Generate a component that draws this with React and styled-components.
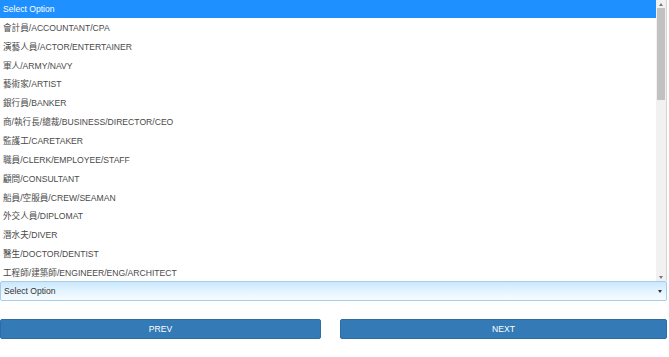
import React from "react";
import styled, { createGlobalStyle } from "styled-components";

const GlobalStyle = createGlobalStyle`
  html, body {
    margin: 0;
    padding: 0;
    background: #ffffff;
  }
  body {
    font-family: "Liberation Sans", "Noto Sans CJK TC", Arial, sans-serif;
  }
`;

const Page = styled.div`
  width: 667px;
  padding-top: 281px;
  display: flex;
  flex-direction: column;
  gap: 18px;
`;

const Field = styled.div`
  position: relative;
`;

const SelectBox = styled.div`
  height: 20px;
  box-sizing: border-box;
  border: 1px solid #a7cdec;
  border-radius: 2px;
  background: linear-gradient(to bottom, #c9e8fd 0%, #e6f5ff 55%, #f7fcff 100%);
  display: flex;
  align-items: center;
  justify-content: space-between;
  padding: 0 4px 0 3px;
  font-size: 8.6px;
  color: #333333;
`;

const Caret = styled.span`
  width: 0;
  height: 0;
  border-left: 2px solid transparent;
  border-right: 2px solid transparent;
  border-top: 3px solid ${(p) => p.$color || "#333"};
`;

const Listbox = styled.div`
  position: absolute;
  left: 0;
  right: 0;
  bottom: 100%;
  height: 281px;
  box-sizing: border-box;
  border-right: 1px solid #d6d6d6;
  background: #ffffff;
  display: flex;
  overflow: hidden;
`;

const Options = styled.ul`
  flex: 1;
  margin: 0;
  padding: 0;
  list-style: none;
  overflow: hidden;
`;

const Option = styled.li`
  height: ${(p) => (p.$selected ? "17.5px" : "18.85px")};
  display: flex;
  align-items: center;
  padding-left: 3px;
  font-size: 8.6px;
  color: ${(p) => (p.$selected ? "#ffffff" : "#4a4a4a")};
  background: ${(p) => (p.$selected ? "#1e90ff" : "transparent")};
  white-space: nowrap;
`;

const ScrollTrack = styled.div`
  width: 10px;
  background: #f1f1f1;
  display: flex;
  flex-direction: column;
  align-items: center;
`;

const ScrollArrow = styled.div`
  height: 8px;
  display: flex;
  align-items: center;
  justify-content: center;
  ${(p) => (p.$down ? "margin-top: auto;" : "")}
`;

const UpCaret = styled.span`
  width: 0;
  height: 0;
  border-left: 2px solid transparent;
  border-right: 2px solid transparent;
  border-bottom: 3px solid #7a7a7a;
`;

const Thumb = styled.div`
  width: 8px;
  height: 92px;
  background: #c1c1c1;
`;

const ButtonRow = styled.div`
  display: grid;
  grid-template-columns: 321px 1fr;
  gap: 19px;
`;

const NavButton = styled.button`
  height: 20px;
  border: 1px solid #2e6da4;
  border-radius: 2px;
  background: #337ab7;
  color: #ffffff;
  font-family: "Liberation Sans", Arial, sans-serif;
  font-size: 8.6px;
  text-transform: uppercase;
  padding: 0;
  cursor: pointer;
`;

const occupations = [
  "會計員/ACCOUNTANT/CPA",
  "演藝人員/ACTOR/ENTERTAINER",
  "軍人/ARMY/NAVY",
  "藝術家/ARTIST",
  "銀行員/BANKER",
  "商/執行長/總裁/BUSINESS/DIRECTOR/CEO",
  "監護工/CARETAKER",
  "職員/CLERK/EMPLOYEE/STAFF",
  "顧問/CONSULTANT",
  "船員/空服員/CREW/SEAMAN",
  "外交人員/DIPLOMAT",
  "潛水夫/DIVER",
  "醫生/DOCTOR/DENTIST",
  "工程師/建築師/ENGINEER/ENG/ARCHITECT",
];

export default function App() {
  return (
    <>
      <GlobalStyle />
      <Page>
        <Field>
          <Listbox>
            <Options>
              <Option $selected>Select Option</Option>
              {occupations.map((o) => (
                <Option key={o}>{o}</Option>
              ))}
            </Options>
            <ScrollTrack>
              <ScrollArrow>
                <UpCaret />
              </ScrollArrow>
              <Thumb />
              <ScrollArrow $down>
                <Caret $color="#7a7a7a" />
              </ScrollArrow>
            </ScrollTrack>
          </Listbox>
          <SelectBox>
            <span>Select Option</span>
            <Caret />
          </SelectBox>
        </Field>
        <ButtonRow>
          <NavButton>Prev</NavButton>
          <NavButton>Next</NavButton>
        </ButtonRow>
      </Page>
    </>
  );
}
